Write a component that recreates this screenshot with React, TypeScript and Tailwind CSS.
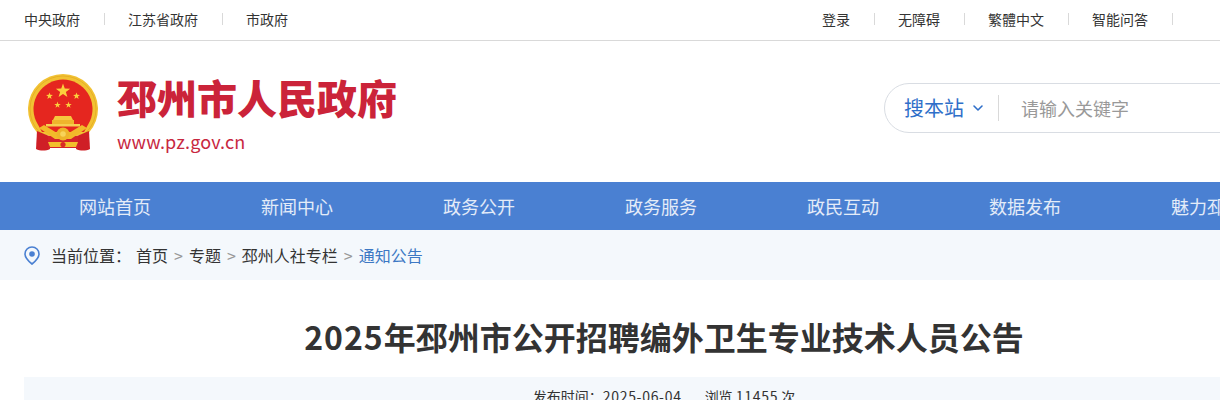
import { ChevronDown } from "lucide-react";

const leftLinks = ["中央政府", "江苏省政府", "市政府"];
const rightLinks = ["登录", "无障碍", "繁體中文", "智能问答"];
const navItems = ["网站首页", "新闻中心", "政务公开", "政务服务", "政民互动", "数据发布", "魅力邳州"];
const crumbs = ["首页", "专题", "邳州人社专栏"];

const Star = ({ cx, cy, r }: { cx: number; cy: number; r: number }) => {
  const points = Array.from({ length: 10 }, (_, i) => {
    const radius = i % 2 === 0 ? r : r * 0.4;
    const angle = -Math.PI / 2 + (i * Math.PI) / 5;
    return `${cx + radius * Math.cos(angle)},${cy + radius * Math.sin(angle)}`;
  }).join(" ");
  return <polygon points={points} fill="#fbd13c" />;
};

// drawn in page coordinates, hence the offset viewBox
const Emblem = () => (
  <svg width="72" height="78" viewBox="27 73 72 78" className="shrink-0">
    <path d="M37 132.4 A35 35 0 1 1 89 132.4 L63 140 Z" fill="#f2c233" />
    <circle cx="63" cy="109" r="33" fill="none" stroke="#dfa822" strokeWidth="0.7" />
    <path d="M36 121 A29.5 29.5 0 1 1 90 121 L84 132 L42 132 Z" fill="#e5261f" />
    <Star cx={63} cy={91} r={7.5} />
    <Star cx={49.5} cy={96} r={3.6} />
    <Star cx={76.5} cy={96} r={3.6} />
    <Star cx={57.5} cy={105} r={3.4} />
    <Star cx={68.5} cy={105} r={3.4} />
    <path d="M55 116h16l2 4H53z" fill="#f6c83e" />
    <rect x="52" y="120" width="22" height="4" fill="#efb52c" />
    <rect x="46" y="124" width="34" height="2.5" fill="#f6cf50" />
    <path d="M37 131 L49 136 L50 149 C46 151 40 151 36 149 Z" fill="#cf1f26" />
    <path d="M89 131 L77 136 L76 149 C80 151 86 151 90 149 Z" fill="#cf1f26" />
    <rect x="48" y="136" width="30" height="12" fill="#d5222a" />
    <path d="M39 128 L44 125 L57 133 L69 133 L82 125 L87 128 L71 139 L55 139 Z" fill="#f2b92a" />
    <circle cx="63" cy="134" r="6.5" fill="#eeb42a" />
    <circle cx="63" cy="134" r="2.8" fill="#f7d35a" />
    <path d="M48 142 L78 142 L76 147 L50 147 Z" fill="#f2bf2c" />
    <circle cx="63" cy="144.5" r="2.6" fill="#d92a24" />
  </svg>
);

const App = () => {
  return (
    <div className="h-[400px] w-full overflow-hidden bg-white font-['Noto_Sans_CJK_SC','Noto_Sans',sans-serif]">
      <div className="w-[1328px]">
        {/* Top bar */}
        <div className="flex h-[41px] items-center justify-between border-b border-[#d9d9d9] pb-[2px] pl-6 pr-[132px] text-sm text-[#333]">
          <div className="flex items-center">
            {leftLinks.map((link, i) => (
              <div key={link} className="flex items-center">
                <span>{link}</span>
                {i < leftLinks.length - 1 && <span className="ml-6 mr-[23px] h-3 w-px bg-[#d9d9d9]" />}
              </div>
            ))}
          </div>
          <div className="flex items-center">
            {rightLinks.map((link) => (
              <div key={link} className="flex items-center">
                <span>{link}</span>
                <span className="ml-6 mr-[23px] h-3 w-px bg-[#d9d9d9]" />
              </div>
            ))}
          </div>
        </div>

        {/* Logo and search */}
        <div className="flex h-[141px] justify-between pl-[27px]">
          <div className="flex pt-8">
            <Emblem />
            <div className="ml-[18px]">
              <div className="text-[40px] leading-[48px] font-black text-[#cb2339]">邳州市人民政府</div>
              <div className="mt-2 text-lg leading-[24px] tracking-[0.15px] text-[#c8283f]">www.pz.gov.cn</div>
            </div>
          </div>
          <div className="mt-[42px] flex h-[50px] w-[444px] items-center rounded-l-full border border-[#d9dde3] pl-[19px]">
            <span className="text-xl text-[#2f6fc9]">搜本站</span>
            <ChevronDown className="ml-[6px] h-4 w-4 text-[#2f6fc9]" strokeWidth={2.4} />
            <span className="ml-3 h-[26px] w-px bg-[#d9d9d9]" />
            <span className="ml-[22px] text-lg text-[#999]">请输入关键字</span>
          </div>
        </div>

        {/* Main nav */}
        <div className="flex h-12 items-center bg-[#4a80d2] pl-6 text-lg text-white/85">
          {navItems.map((item) => (
            <div key={item} className="w-[182px] text-center">
              {item}
            </div>
          ))}
        </div>

        {/* Breadcrumb */}
        <div className="flex h-[50px] items-center bg-[#f4f8fc] pl-6 text-base text-[#333]">
          <svg width="16" height="19" viewBox="0 0 16 19" className="shrink-0">
            <path d="M8 1C4.1 1 1 4.1 1 7.9c0 4.3 4.6 8.2 7 10.1 2.4-1.9 7-5.8 7-10.1C15 4.1 11.9 1 8 1z" fill="none" stroke="#4a80d2" strokeWidth="1.6" />
            <circle cx="8" cy="8" r="2.8" fill="#4a80d2" />
          </svg>
          <span className="ml-[11px]">当前位置：</span>
          <span className="ml-[5px]">首页</span>
          {crumbs.slice(1).map((crumb) => (
            <span key={crumb} className="flex items-center">
              <span className="mx-[6px] text-[#999]">&gt;</span>
              <span>{crumb}</span>
            </span>
          ))}
          <span className="mx-[6px] text-[#999]">&gt;</span>
          <span className="text-[#3d78c4]">通知公告</span>
        </div>

        {/* Article heading */}
        <div className="ml-6 w-[1280px]">
          <h1 className="pt-8 pb-4 text-center text-[32px] leading-[49px] font-bold text-[#333]">
            <span className="tracking-[1px]">2025</span>年邳州市公开招聘编外卫生专业技术人员公告
          </h1>
          <div className="flex h-12 justify-center bg-[#f4f8fc] pt-[9px] text-sm text-[#333]">
            <span>
              发布时间：<span className="tracking-[0.7px]">2025-06-04</span>
            </span>
            <span className="ml-[23px]">
              浏览 <span className="tracking-[0.7px]">11455</span> 次
            </span>
          </div>
        </div>
      </div>
    </div>
  );
};

export default App;
